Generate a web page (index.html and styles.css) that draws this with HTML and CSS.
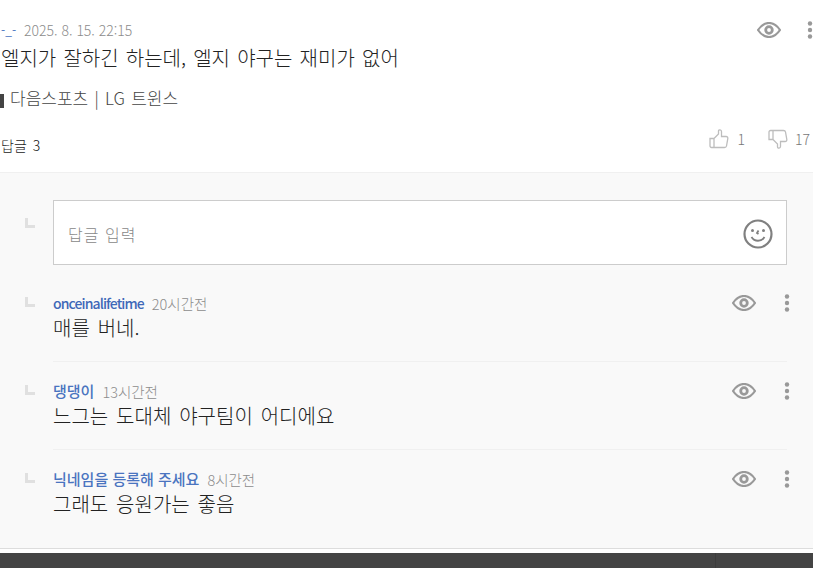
FILE: index.html
```html
<!DOCTYPE html>
<html lang="ko">
<head>
  <meta charset="UTF-8" />
  <title>댓글</title>
  <link rel="stylesheet" href="styles.css">
</head>
<body>
  <svg class="defs" width="0" height="0">
    <symbol id="eye" viewBox="0 0 24 16">
      <path d="M1 8C4 3.500 8 1 12 1s8 2.500 11 7c-3 4.500-7 7-11 7S4 12.500 1 8z" fill="none" stroke="#999" stroke-width="2.200"/>
      <circle cx="12" cy="8" r="3.300" fill="none" stroke="#999" stroke-width="2.800"/>
    </symbol>
    <symbol id="more" viewBox="0 0 6 18">
      <circle cx="3" cy="2.500" r="2.200" fill="#999"/>
      <circle cx="3" cy="9" r="2.200" fill="#999"/>
      <circle cx="3" cy="15.500" r="2.200" fill="#999"/>
    </symbol>
    <symbol id="corner" viewBox="0 0 10 10">
      <path d="M0 0h3v7h7v3H0z" fill="#e0e0e0"/>
    </symbol>
    <symbol id="thumb" viewBox="0 0 20 20">
      <path d="M1 9.500h4v9H2.500A1.500 1.500 0 0 1 1 17zM5 9.500 9.500 5V2c0-1.500 3-1.500 3 .5V7.500h4.500c1.500 0 2 1 1.800 2.200l-1.300 7.300c-.2 1-1 1.500-2 1.500H5" fill="none" stroke="#bdbdbd" stroke-width="1.300"/>
    </symbol>
  </svg>

  <div class="post">
    <div class="meta">
      <a class="nick nick-small">-_-</a>
      <span class="date date-post">2025. 8. 15. 22:15</span>
      <span class="tools">
        <svg class="eye"><use href="#eye"/></svg>
        <svg class="more"><use href="#more"/></svg>
      </span>
    </div>
    <p class="post-text">엘지가 잘하긴 하는데, 엘지 야구는 재미가 없어</p>
    <p class="source">다음스포츠 | LG 트윈스</p>
    <div class="post-foot">
      <span class="reply-count">답글 <b>3</b></span>
      <span class="votes">
        <svg class="thumb"><use href="#thumb"/></svg><span class="num num-up">1</span>
        <svg class="thumb down"><use href="#thumb"/></svg><span class="num">17</span>
      </span>
    </div>
  </div>

  <div class="replies">
    <div class="reply-form">
      <svg class="corner"><use href="#corner"/></svg>
      <div class="reply-input">
        <span>답글 입력</span>
        <svg class="smile" viewBox="0 0 30 30">
          <circle cx="15" cy="15" r="13.500" fill="none" stroke="#808080" stroke-width="2.200"/>
          <circle cx="9.500" cy="11.500" r="1.500" fill="#808080"/>
          <circle cx="20.500" cy="11.500" r="1.500" fill="#808080"/>
          <path d="M15.500 11.500l-1.500 2.500 1.500 1M8.500 18c3 5 10 5 13 0" fill="none" stroke="#808080" stroke-width="1.800"/>
        </svg>
      </div>
    </div>

    <div class="reply">
      <svg class="corner"><use href="#corner"/></svg>
      <div class="reply-body">
        <div class="meta">
          <a class="nick nick-latin">onceinalifetime</a>
          <span class="date">20시간전</span>
          <span class="tools">
            <svg class="eye"><use href="#eye"/></svg>
            <svg class="more"><use href="#more"/></svg>
          </span>
        </div>
        <p class="reply-text">매를 버네.</p>
      </div>
    </div>

    <div class="reply">
      <svg class="corner"><use href="#corner"/></svg>
      <div class="reply-body">
        <div class="meta">
          <a class="nick">댕댕이</a>
          <span class="date">13시간전</span>
          <span class="tools">
            <svg class="eye"><use href="#eye"/></svg>
            <svg class="more"><use href="#more"/></svg>
          </span>
        </div>
        <p class="reply-text">느그는 도대체 야구팀이 어디에요</p>
      </div>
    </div>

    <div class="reply">
      <svg class="corner"><use href="#corner"/></svg>
      <div class="reply-body">
        <div class="meta">
          <a class="nick">닉네임을 등록해 주세요</a>
          <span class="date">8시간전</span>
          <span class="tools">
            <svg class="eye"><use href="#eye"/></svg>
            <svg class="more"><use href="#more"/></svg>
          </span>
        </div>
        <p class="reply-text">그래도 응원가는 좋음</p>
      </div>
    </div>
  </div>

  <div class="footer-gap"></div>
  <div class="footer">
    <div class="footer-left"></div>
  </div>
</body>
</html>
```

FILE: styles.css
```css
html, body {
  height: 100%;
}
body {
  margin: 0;
  background-color: white;
  font-family: "Noto Sans CJK KR", "Liberation Sans", sans-serif;
  overflow: hidden;
  color: #333;
}
p {
  margin: 0;
}
.defs {
  position: absolute;
}
.post {
  height: 173px;
  padding: 20px 0 0 1px;
  box-sizing: border-box;
  border-bottom: 1px solid #f0f0f0;
}
.meta {
  display: flex;
  align-items: center;
  height: 20px;
}
.nick {
  font-size: 15px;
  font-weight: 500;
  color: #4a74c0;
  margin-right: 8px;
  line-height: 20px;
}
.nick-small {
  font-size: 12px;
  font-weight: 400;
}
.nick-latin {
  font-size: 14px;
  letter-spacing: -0.9px;
  color: #3f68b8;
}
.date {
  font-size: 14.5px;
  font-weight: 300;
  color: #8c8c8c;
}
.date-post {
  font-size: 14px;
}
.tools {
  margin-left: auto;
  display: flex;
  align-items: center;
}
.eye {
  width: 24px;
  height: 16px;
}
.more {
  width: 6px;
  height: 18px;
  margin-left: 26px;
}
.post-text {
  font-size: 20px;
  font-weight: 300;
  word-spacing: 1.6px;
  line-height: 28px;
  margin-top: 4px;
  color: #222;
}
.source {
  position: relative;
  font-size: 17px;
  font-weight: 300;
  word-spacing: 1.5px;
  line-height: 22px;
  margin-top: 15px;
  padding-left: 9px;
  color: #444;
}
.source::before {
  content: "";
  position: absolute;
  left: -1px;
  top: 7px;
  width: 4px;
  height: 14px;
  background-color: #444;
}
.post-foot {
  display: flex;
  justify-content: space-between;
  margin-top: 22px;
}
.reply-count {
  font-size: 14px;
  font-weight: 300;
  word-spacing: 2px;
  line-height: 24px;
  margin-top: 2px;
  color: #222;
}
.reply-count b {
  font-weight: 300;
  color: #111;
}
.votes {
  display: flex;
  align-items: center;
  height: 22px;
  margin-top: -3px;
  padding-right: 3px;
  font-size: 14px;
  font-weight: 300;
  color: #777;
}
.thumb {
  width: 20px;
  height: 20px;
}
.thumb.down {
  transform: rotate(180deg) scaleX(-1);
  margin-left: 23px;
}
.num {
  margin-left: 7px;
}
.num-up {
  margin-left: 9px;
}
.replies {
  height: 376px;
  box-sizing: border-box;
  padding: 27px 26px 0 25px;
  background-color: #f9f9f9;
  border-bottom: 1px solid #ddd;
}
.corner {
  width: 10px;
  height: 10px;
  flex: none;
  margin-right: 18px;
}
.reply-form {
  display: flex;
  align-items: flex-start;
  margin-bottom: 28px;
}
.reply-form .corner {
  margin-top: 18px;
}
.reply-input {
  flex: 1;
  height: 65px;
  box-sizing: border-box;
  display: flex;
  align-items: center;
  justify-content: space-between;
  padding: 3px 13px 0 14px;
  background-color: white;
  border: 1px solid #ccc;
}
.reply-input span {
  font-size: 16px;
  font-weight: 300;
  letter-spacing: 1px;
  color: #888;
}
.smile {
  width: 30px;
  height: 30px;
}
.reply {
  display: flex;
  align-items: flex-start;
  height: 88px;
}
.reply .corner {
  margin-top: 4px;
}
.reply-body {
  flex: 1;
  height: 68px;
  border-bottom: 1px solid #f0f0f0;
}
.reply:last-child .reply-body {
  border-bottom: none;
}
.reply-body .tools {
  margin-right: -3px;
}
.reply-body .more {
  margin-left: 28px;
}
.reply-text {
  font-size: 20px;
  font-weight: 300;
  word-spacing: 2.3px;
  line-height: 26px;
  margin-top: 2px;
  color: #222;
}
.footer-gap {
  height: 4px;
}
.footer {
  height: 15px;
  background-color: #444;
}
.footer-left {
  width: 715px;
  height: 100%;
  border-right: 1px solid #3c3c3c;
}
```
